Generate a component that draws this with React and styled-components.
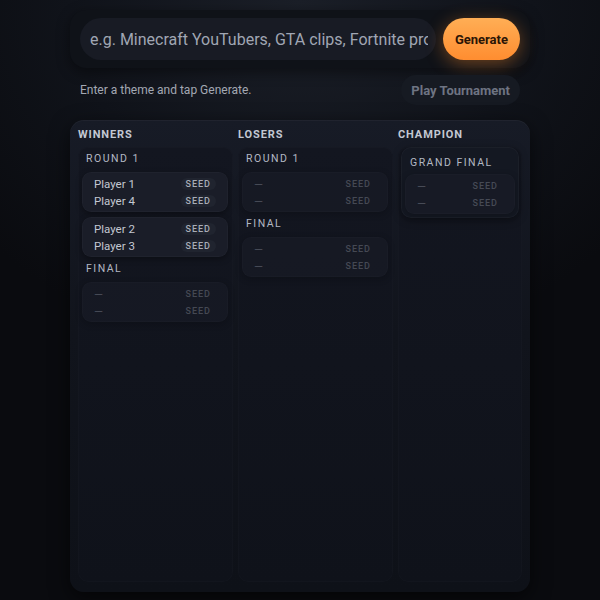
import React from "react";
import styled, { createGlobalStyle } from "styled-components";

const GlobalStyle = createGlobalStyle`
  html, body {
    margin: 0;
    padding: 0;
    height: 100%;
  }
  body {
    font-family: Roboto, "Noto Sans", sans-serif;
    background: radial-gradient(ellipse 70% 60% at 50% 0%, #1b1f28 0%, #10131a 55%, #0a0b0f 100%);
    background-color: #0a0b0f;
    min-height: 600px;
  }
`;

const Page = styled.div`
  width: 460px;
  margin: 0 auto;
  padding-top: 10px;
  display: flex;
  flex-direction: column;
`;

const TopBar = styled.div`
  display: flex;
  align-items: center;
  gap: 7px;
  padding: 8px 10px;
  background: #0f1218;
  border-radius: 16px;
  box-shadow: 0 4px 14px rgba(0, 0, 0, 0.45);
`;

const Input = styled.input`
  flex: 1;
  min-width: 0;
  height: 42px;
  box-sizing: border-box;
  padding: 0 8px 0 10px;
  border: none;
  border-radius: 21px;
  background: #181b24;
  color: #c9ceda;
  font-family: Roboto, sans-serif;
  font-size: 16px;
  outline: none;
  &::placeholder {
    color: #a0a6b3;
  }
`;

const GenerateButton = styled.button`
  height: 42px;
  padding: 0 12px;
  border: none;
  border-radius: 21px;
  background: linear-gradient(180deg, #ffae55 0%, #ff8d30 100%);
  color: #2b1506;
  font-family: Roboto, sans-serif;
  font-weight: 700;
  font-size: 13px;
  box-shadow: 0 4px 18px rgba(255, 140, 40, 0.4);
`;

const StatusRow = styled.div`
  display: flex;
  align-items: center;
  justify-content: space-between;
  padding: 7px 10px 0 10px;
`;

const StatusText = styled.span`
  color: #a3a8b3;
  font-size: 12px;
`;

const PlayButton = styled.button`
  height: 30px;
  padding: 0 10px;
  border: none;
  border-radius: 15px;
  background: #161a22;
  color: #6e7482;
  font-family: Roboto, sans-serif;
  font-weight: 700;
  font-size: 13px;
`;

const Bracket = styled.div`
  margin-top: 15px;
  height: 472px;
  box-sizing: border-box;
  padding: 7px 8px 10px 8px;
  display: grid;
  grid-template-columns: 155px 155px 1fr;
  gap: 5px;
  border-radius: 14px;
  background: linear-gradient(180deg, #171b26 0%, #11141c 45%, #0e1118 100%);
  box-shadow: 0 6px 20px rgba(0, 0, 0, 0.6), inset 0 1px 0 rgba(255, 255, 255, 0.04);
`;

const Column = styled.div`
  display: flex;
  flex-direction: column;
  gap: 4px;
  min-height: 0;
`;

const ColumnTitle = styled.div`
  color: #c3c8d3;
  font-size: 11px;
  font-weight: 700;
  letter-spacing: 0.9px;
  padding: 1px 0 2px 0;
`;

const Lane = styled.div`
  flex: 1;
  display: flex;
  flex-direction: column;
  gap: 5px;
  padding: ${(p) => p.$pad || "5px 2px 0 2px"};
  border-radius: 10px;
  background: linear-gradient(180deg, #131620 0%, #0f121a 100%);
  box-shadow: inset 0 0 0 1px rgba(255, 255, 255, 0.015);
`;

const Round = styled.div`
  display: flex;
  flex-direction: column;
  gap: 5px;
  padding: 3px 4px 4px 4px;
  border-radius: 10px;
  background: #141822;
  box-shadow: 0 2px 8px rgba(0, 0, 0, 0.35), inset 0 0 0 1px rgba(255, 255, 255, 0.03);
`;

const RoundTitle = styled.div`
  color: #b3b8c3;
  font-size: 10.5px;
  font-weight: 400;
  letter-spacing: 1.5px;
  padding: ${(p) => p.$pad || "0 4px 2px 4px"};
`;

const Match = styled.div`
  display: flex;
  flex-direction: column;
  padding: 3px 12px;
  border-radius: 9px;
  background: #1a1d28;
  box-shadow: 0 2px 6px rgba(0, 0, 0, 0.35), inset 0 0 0 1px rgba(255, 255, 255, 0.025);
  opacity: ${(p) => (p.$empty ? 0.55 : 1)};
`;

const Slot = styled.div`
  display: flex;
  align-items: center;
  justify-content: space-between;
  height: 17px;
`;

const Name = styled.span`
  color: ${(p) => (p.$empty ? "#7b808c" : "#c4c8d2")};
  font-size: 11.5px;
`;

const Seed = styled.span`
  padding: 1px 5px;
  border-radius: 7px;
  background: ${(p) => (p.$empty ? "transparent" : "#20242f")};
  color: ${(p) => (p.$empty ? "#6f7480" : "#a8adb8")};
  font-size: 9px;
  font-weight: 500;
  letter-spacing: 1px;
`;

const MatchCard = ({ a, b }) => {
  const empty = !a;
  return (
    <Match $empty={empty}>
      <Slot>
        <Name $empty={empty}>{a || "—"}</Name>
        <Seed $empty={empty}>SEED</Seed>
      </Slot>
      <Slot>
        <Name $empty={empty}>{b || "—"}</Name>
        <Seed $empty={empty}>SEED</Seed>
      </Slot>
    </Match>
  );
};

const App = () => (
  <>
    <GlobalStyle />
    <Page>
      <TopBar>
        <Input placeholder="e.g. Minecraft YouTubers, GTA clips, Fortnite pros" />
        <GenerateButton>Generate</GenerateButton>
      </TopBar>
      <StatusRow>
        <StatusText>Enter a theme and tap Generate.</StatusText>
        <PlayButton>Play Tournament</PlayButton>
      </StatusRow>
      <Bracket>
        <Column>
          <ColumnTitle>WINNERS</ColumnTitle>
          <Lane $pad="5px 5px 0 4px">
            <RoundTitle>ROUND 1</RoundTitle>
            <MatchCard a="Player 1" b="Player 4" />
            <MatchCard a="Player 2" b="Player 3" />
            <RoundTitle>FINAL</RoundTitle>
            <MatchCard />
          </Lane>
        </Column>
        <Column>
          <ColumnTitle>LOSERS</ColumnTitle>
          <Lane $pad="5px 5px 0 4px">
            <RoundTitle>ROUND 1</RoundTitle>
            <MatchCard />
            <RoundTitle>FINAL</RoundTitle>
            <MatchCard />
          </Lane>
        </Column>
        <Column>
          <ColumnTitle>CHAMPION</ColumnTitle>
          <Lane $pad="0 3px">
            <Round>
              <RoundTitle $pad="6px 5px 0 5px">GRAND FINAL</RoundTitle>
              <MatchCard />
            </Round>
          </Lane>
        </Column>
      </Bracket>
    </Page>
  </>
);

export default App;
